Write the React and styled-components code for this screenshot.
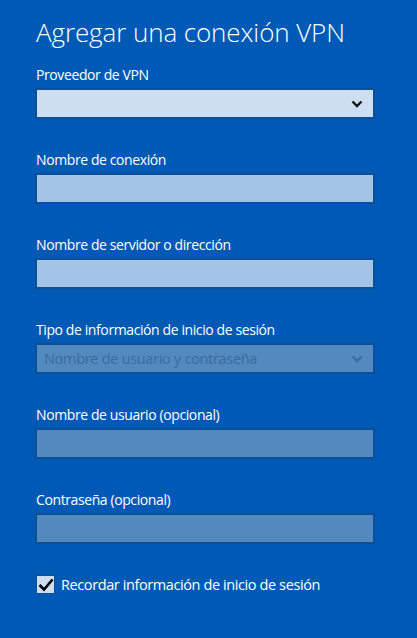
import * as React from "react";
import styled, { createGlobalStyle } from "styled-components";

const GlobalStyle = createGlobalStyle`
  html, body {
    margin: 0;
    padding: 0;
    background: #005ab5;
  }
  body {
    font-family: "Segoe UI", "Open Sans", "Noto Sans", sans-serif;
  }
`;

const fields = [
  { label: "Proveedor de VPN", kind: "select", tone: "light" },
  { label: "Nombre de conexión", kind: "input", tone: "mid" },
  { label: "Nombre de servidor o dirección", kind: "input", tone: "mid" },
  {
    label: "Tipo de información de inicio de sesión",
    kind: "select",
    tone: "dim",
    value: "Nombre de usuario y contraseña",
  },
  { label: "Nombre de usuario (opcional)", kind: "input", tone: "dim" },
  { label: "Contraseña (opcional)", kind: "input", tone: "dim" },
];

const tones = {
  light: "#cddef1",
  mid: "#a3c4e4",
  dim: "#5289be",
};

const Chevron = ({ color }) => (
  <svg width="12" height="8" viewBox="0 0 12 8">
    <path d="M1.5 1.5 L6 6 L10.5 1.5" fill="none" stroke={color} strokeWidth="2.4" />
  </svg>
);

const App = () => (
  <Page>
    <GlobalStyle />
    <Title>Agregar una conexión VPN</Title>
    <Form>
      {fields.map((f) => (
        <Group key={f.label}>
          <Label>{f.label}</Label>
          <Box $bg={tones[f.tone]}>
            {f.value && <BoxText>{f.value}</BoxText>}
            {f.kind === "select" && (
              <Chevron color={f.tone === "dim" ? "#3b6c9d" : "#111"} />
            )}
          </Box>
        </Group>
      ))}
      <CheckRow>
        <CheckBox>
          <svg width="16" height="14" viewBox="0 0 16 14">
            <path d="M1.5 7 L6 11.5 L14.5 1.5" fill="none" stroke="#000" strokeWidth="2.6" />
          </svg>
        </CheckBox>
        <CheckLabel>Recordar información de inicio de sesión</CheckLabel>
      </CheckRow>
    </Form>
  </Page>
);

const Page = styled.div`
  width: 417px;
  height: 638px;
  box-sizing: border-box;
  padding: 12px 42px 0 35px;
  background: #005ab5;
  color: #fff;
`;

const Title = styled.h1`
  margin: 0 0 0 1px;
  font-family: "Open Sans", sans-serif;
  font-weight: 300;
  font-size: 26px;
  line-height: 40px;
  letter-spacing: -0.1px;
`;

const Form = styled.div`
  display: flex;
  flex-direction: column;
  gap: 30px;
  margin-top: 12px;
`;

const Group = styled.div`
  display: flex;
  flex-direction: column;
  gap: 3px;
`;

const Label = styled.div`
  font-family: "Open Sans", sans-serif;
  font-size: 14px;
  line-height: 21px;
  padding-left: 1px;
  letter-spacing: -0.4px;
`;

const Box = styled.div`
  height: 31px;
  box-sizing: border-box;
  border: 2px solid #0b4f95;
  background: ${(p) => p.$bg};
  display: flex;
  align-items: center;
  justify-content: flex-end;
  padding: 0 10px 0 7px;
`;

const BoxText = styled.span`
  flex: 1;
  font-family: "Open Sans", sans-serif;
  font-size: 14.5px;
  color: #3a6c9e;
  letter-spacing: -0.3px;
`;

const CheckRow = styled.div`
  display: flex;
  align-items: center;
  gap: 6px;
  margin-top: 1px;
`;

const CheckBox = styled.div`
  width: 19px;
  height: 19px;
  box-sizing: border-box;
  border: 1px solid #0b4f95;
  background: #cddef1;
  display: flex;
  align-items: center;
  justify-content: center;
  margin-left: 1px;
`;

const CheckLabel = styled.span`
  font-family: "Open Sans", sans-serif;
  font-size: 14.5px;
  letter-spacing: -0.4px;
`;

export default App;
